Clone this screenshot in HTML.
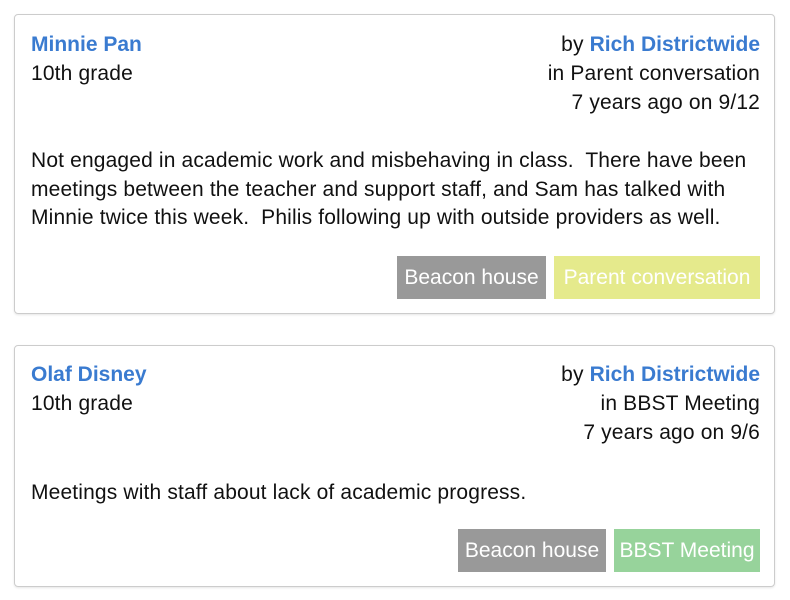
<!DOCTYPE html>
<html><head><style>
body{margin:0;width:790px;height:600px;background:#fff;font-family:"Liberation Sans",sans-serif;font-size:21px;letter-spacing:0.15px;color:#111;position:relative;overflow:hidden}
.card{position:absolute;left:14px;width:759px;border:1px solid #ccc;border-radius:4px;box-shadow:0 1px 2px rgba(0,0,0,.1)}
.t{position:absolute;line-height:29px;white-space:nowrap}
.l{left:16px}.r{right:14px;text-align:right}
a{color:#3a7bd0;font-weight:bold;text-decoration:none;letter-spacing:0}
.tag{position:absolute;height:43px;line-height:43px;color:#fff;text-align:center;font-size:21px;letter-spacing:0}
.g{background:#999}.y{background:#e5ea8c}.gr{background:#97d39b}
</style></head><body>
<div class="card" style="top:14px;height:298px">
<div class="t l" style="top:15px"><a>Minnie Pan</a><br>10th grade</div>
<div class="t r" style="top:15px">by <a>Rich Districtwide</a><br>in Parent conversation<br>7 years ago on 9/12</div>
<div class="t l" style="top:132px;line-height:28.5px">Not engaged in academic work and misbehaving in class.&nbsp; There have been<br>meetings between the teacher and support staff, and Sam has talked with<br>Minnie twice this week.&nbsp; Philis following up with outside providers as well.</div>
<div class="tag g" style="left:382px;top:241px;width:149px">Beacon house</div>
<div class="tag y" style="left:539px;top:241px;width:206px">Parent conversation</div>
</div>
<div class="card" style="top:345px;height:240px">
<div class="t l" style="top:14px"><a>Olaf Disney</a><br>10th grade</div>
<div class="t r" style="top:14px">by <a>Rich Districtwide</a><br>in BBST Meeting<br>7 years ago on 9/6</div>
<div class="t l" style="top:132px">Meetings with staff about lack of academic progress.</div>
<div class="tag g" style="left:443px;top:183px;width:148px">Beacon house</div>
<div class="tag gr" style="left:599px;top:183px;width:146px">BBST Meeting</div>
</div>
</body></html>
